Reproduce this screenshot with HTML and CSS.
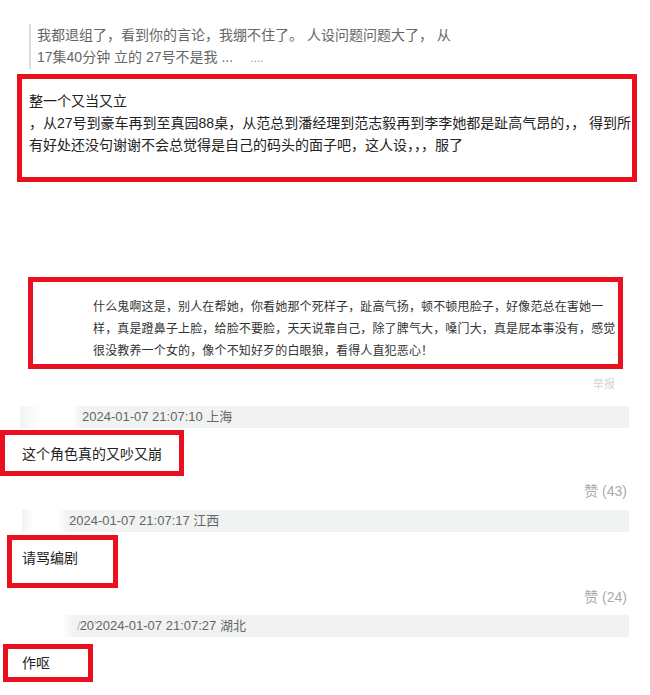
FILE: index.html
```html
<!DOCTYPE html>
<html lang="zh-CN">
<head>
    <meta charset="UTF-8">
    <meta name="viewport" content="width=device-width, initial-scale=1.0">
    <title>评论截图</title>
    <link rel="stylesheet" href="styles.css">
</head>
<body>
    <div class="page">
        <!-- quoted reply -->
        <div class="quote">
            <div>我都退组了，看到你的言论，我绷不住了。 人设问题问题大了， 从</div>
            <div>17集40分钟 立的 27号不是我 ... <span class="dots">&nbsp;&nbsp;&nbsp;&nbsp;....</span></div>
        </div>

        <div class="mark box1">
            <div>整一个又当又立</div>
            <div>，从27号到豪车再到至真园88桌，从范总到潘经理到范志毅再到李李她都是趾高气昂的，，&nbsp;得到所</div>
            <div>有好处还没句谢谢不会总觉得是自己的码头的面子吧，这人设，，，服了</div>
        </div>

        <div class="mark box2">
            <div>什么鬼啊这是，别人在帮她，你看她那个死样子，趾高气扬，顿不顿甩脸子，好像范总在害她一</div>
            <div>样，真是蹬鼻子上脸，给脸不要脸，天天说靠自己，除了脾气大，嗓门大，真是屁本事没有，感觉</div>
            <div>很没教养一个女的，像个不知好歹的白眼狼，看得人直犯恶心！</div>
        </div>
        <div class="report">举报</div>

        <div class="meta meta1">2024-01-07 21:07:10 上海</div>
        <div class="mark box3">这个角色真的又吵又崩</div>
        <div class="like like1">赞 (43)</div>

        <div class="meta meta2">2024-01-07 21:07:17 江西</div>
        <div class="mark box4">请骂编剧</div>
        <div class="like">赞 (24)</div>

        <div class="meta meta3"><span class="cut">/</span>20<span class="cut">'</span>2024-01-07 21:07:27 湖北</div>
        <div class="mark box5">作呕</div>
    </div>
</body>
</html>
```

FILE: styles.css
```css
body {
    margin: 0;
    background-color: #fff;
    font-family: "Liberation Sans", "Noto Sans CJK SC", sans-serif;
    color: #222;
}
.page {
    width: 650px;
    padding-top: 24px;
}
.quote {
    margin-left: 29px;
    border-left: 2px solid #dcdcdc;
    padding-left: 6px;
    font-size: 14px;
    line-height: 22px;
    color: #666;
    white-space: nowrap;
}
.quote .dots {
    color: #999;
    font-size: 12px;
}
.mark {
    border: 5px solid #e9101f;
    white-space: nowrap;
}
.box1 {
    margin: 5px 0 0 17px;
    width: 603px;
    padding: 11px 0 21px 7px;
    font-size: 14px;
    line-height: 22px;
    overflow: hidden;
}
.box2 {
    margin: 95px 0 0 28px;
    width: 525px;
    padding: 14px 0 2px 60px;
    font-size: 12px;
    line-height: 22px;
    letter-spacing: 0.15px;
    color: #333;
}
.report {
    margin-top: 5px;
    padding-right: 35px;
    text-align: right;
    font-size: 11px;
    line-height: 20px;
    color: #d4d4d4;
}
.meta {
    margin-top: 12px;
    height: 22px;
    font-size: 13px;
    line-height: 22px;
    color: #666;
    white-space: nowrap;
}
.meta1 {
    margin-left: 20px;
    width: 547px;
    padding-left: 62px;
    background: linear-gradient(to right, #f0f3f2 0, #fff 20px, #fff 52px, #f0f3f2 62px);
}
.meta2 {
    margin-top: 10px;
    margin-left: 22px;
    width: 560px;
    padding-left: 47px;
    background: linear-gradient(to right, #f0f3f2 0, #fff 12px, #fff 36px, #f0f3f2 46px);
}
.meta3 {
    margin-top: 9px;
    margin-left: 22px;
    width: 552px;
    padding-left: 55px;
    background: linear-gradient(to right, #fff 0, #fff 40px, #f0f3f2 52px);
}
.meta3 .cut {
    color: #bbb;
    letter-spacing: -1px;
}
.box3 {
    margin-top: 2px;
    width: 157px;
    padding: 9px 0 7px 17px;
    font-size: 14px;
    line-height: 20px;
}
.box4 {
    margin: 3px 0 0 7px;
    width: 91px;
    padding: 8px 0 15px 10px;
    font-size: 14px;
    line-height: 20px;
}
.box5 {
    margin: 7px 0 0 3px;
    width: 66px;
    padding: 4px 0 4px 14px;
    font-size: 14px;
    line-height: 20px;
}
.like {
    padding-right: 23px;
    text-align: right;
    font-size: 14px;
    line-height: 18px;
    color: #aaa;
}
.like1 {
    margin-top: 6px;
}
```
